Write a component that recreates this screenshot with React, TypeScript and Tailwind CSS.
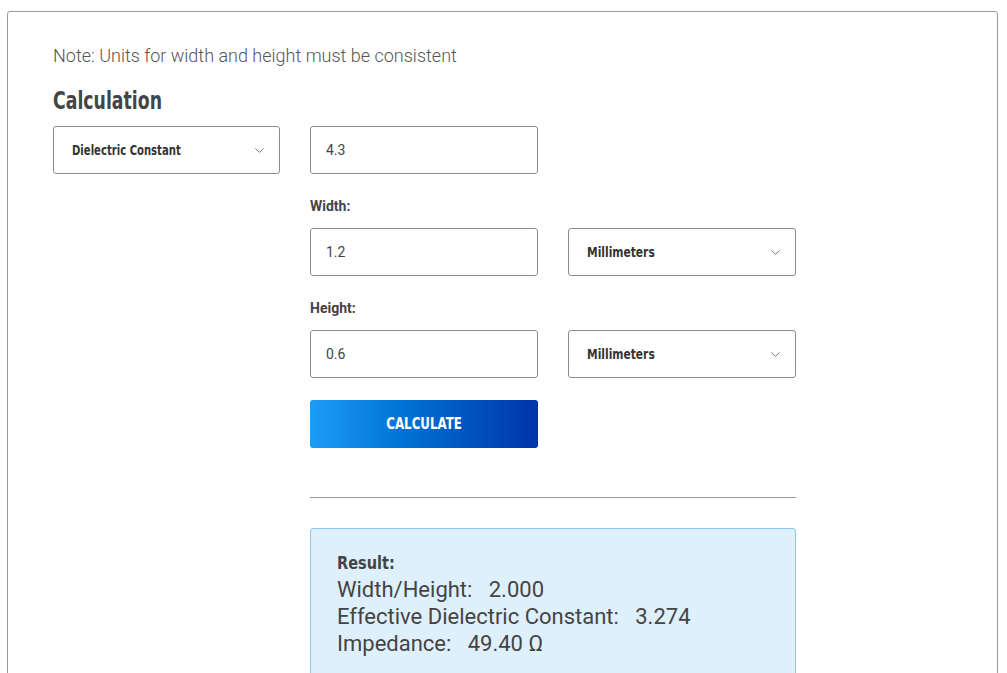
import { ChevronDown } from "lucide-react";

const condensed = "font-['DejaVu_Sans_Condensed',sans-serif]";
const roboto = "font-['Roboto',sans-serif]";

function Select({ label, wide }: { label: string; wide?: boolean }) {
  return (
    <div
      className={`flex h-[48px] shrink-0 items-center justify-between rounded-[3px] border border-[#8c8c8c] bg-white pl-[18px] pr-[12px] ${wide ? "w-[228px]" : "w-[227px]"}`}
    >
      <span
        className={`${condensed} inline-block origin-left text-[14px] font-bold text-[#333] ${wide ? "scale-x-[0.85]" : "scale-x-[0.8]"}`}
      >
        {label}
      </span>
      <ChevronDown className="h-[15px] w-[15px] text-[#555]" strokeWidth={1.3} />
    </div>
  );
}

function Field({ value }: { value: string }) {
  return (
    <div className={`${roboto} flex h-[48px] w-[228px] shrink-0 items-center rounded-[3px] border border-[#8c8c8c] bg-white pl-[15px] text-[14px] text-[#444]`}>
      {value}
    </div>
  );
}

function Label({ text }: { text: string }) {
  return <div className={`${roboto} mt-[22px] mb-[12px] h-[20px] text-[14px] font-bold leading-[20px] text-[#444]`}>{text}</div>;
}

export default function App() {
  return (
    <div className="h-[673px] overflow-hidden bg-white">
      <div className="ml-[7px] mt-[11px] h-[700px] w-[991px] rounded-[3px] border border-[#999] pl-[45px] pt-[32px]">
        <p className={`${roboto} text-[18px] font-light leading-[24px] text-[#555]`}>
          Note: Units for width and height must be consistent
        </p>
        <h2 className={`${condensed} mt-[18px] inline-block origin-left scale-x-[0.77] text-[25px] font-bold leading-[30px] text-[#444]`}>
          Calculation
        </h2>
        <div className="mt-[10px] flex">
          <Select label="Dielectric Constant" />
          <div className="ml-[30px] flex w-[486px] flex-col">
            <Field value="4.3" />
            <Label text="Width:" />
            <div className="flex gap-[30px]">
              <Field value="1.2" />
              <Select label="Millimeters" wide />
            </div>
            <Label text="Height:" />
            <div className="flex gap-[30px]">
              <Field value="0.6" />
              <Select label="Millimeters" wide />
            </div>
            <button
              className="mt-[22px] flex h-[48px] w-[228px] items-center justify-center rounded-[3px] bg-gradient-to-r from-[#1c9cf6] to-[#0033a8]"
            >
              <span className={`${condensed} inline-block scale-x-[0.88] text-[15px] font-bold text-white`}>CALCULATE</span>
            </button>
            <div className="mt-[49px] h-px w-full bg-[#999]" />
            <div className="mt-[30px] h-[200px] w-full rounded-[3px] border border-[#8ec8f0] bg-[#dff0fd] pl-[26px] pt-[22px] text-[#444]">
              <div className={`${condensed} inline-block origin-left scale-x-[0.95] text-[17px] font-bold leading-[22px]`}>Result:</div>
              <div className={`${roboto} mt-[1px] text-[22px] leading-[27px]`}>
                <div>Width/Height:&nbsp;&nbsp; 2.000</div>
                <div>Effective Dielectric Constant:&nbsp;&nbsp; 3.274</div>
                <div>Impedance:&nbsp;&nbsp; 49.40 Ω</div>
              </div>
            </div>
          </div>
        </div>
      </div>
    </div>
  );
}
